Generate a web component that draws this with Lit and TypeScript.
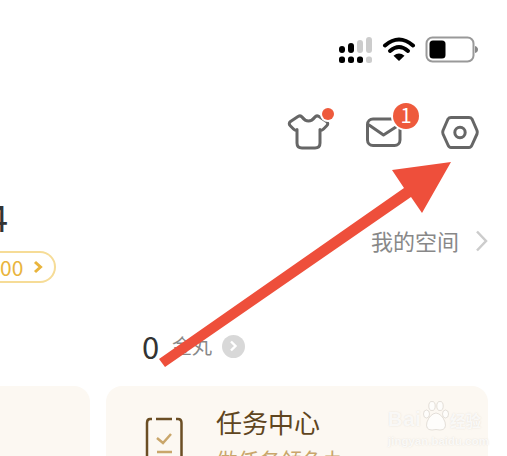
import { LitElement, html, css, svg } from "lit";
import { customElement } from "lit/decorators.js";

const FONT = '"Noto Sans CJK SC", "Noto Sans", sans-serif';

@customElement("app-root")
export class AppRoot extends LitElement {
  static styles = css`
    :host {
      display: block;
      position: relative;
      width: 507px;
      height: 456px;
      overflow: hidden;
      background: #fff;
      font-family: "Noto Sans CJK SC", "Noto Sans", sans-serif;
    }
    svg { display: block; flex: none; }
    .status {
      display: flex;
      justify-content: flex-end;
      height: 32px;
      padding: 34px 25px 0 0;
    }
    .tools {
      display: flex;
      justify-content: flex-end;
      height: 50px;
      margin-top: 34px;
      padding-right: 26px;
    }
    .tools .shirt { margin-right: 26px; }
    .tools .mail { margin-right: 19px; }
    .profile {
      display: flex;
      justify-content: space-between;
      height: 185px;
      padding-right: 19px;
    }
    .who {
      display: flex;
      flex-direction: column;
      align-items: flex-start;
      padding-top: 41px;
    }
    .num {
      font-size: 36px;
      line-height: 50px;
      color: #333;
      width: 8px;
      display: flex;
      justify-content: flex-end;
      overflow: hidden;
    }
    .pill {
      box-sizing: border-box;
      margin-top: 10px;
      width: 56px;
      height: 32px;
      border: 2px solid #f6dc97;
      border-left: none;
      border-radius: 0 16px 16px 0;
      display: flex;
      align-items: center;
      color: #e9b43c;
      font-size: 21px;
      line-height: 1;
      gap: 10px;
    }
    .space {
      display: flex;
      align-items: center;
      gap: 16px;
      height: 24px;
      margin-top: 78px;
      color: #888;
      font-size: 22px;
      line-height: 24px;
    }
    .space svg { margin-top: 2px; }
    .stats {
      display: flex;
      align-items: center;
      height: 24px;
      padding: 0 0 0 142px;
      margin-top: -1px;
    }
    .zero { font-size: 31px; line-height: 24px; color: #333; width: 30px; }
    .unit { font-size: 20px; line-height: 24px; color: #888; width: 50px; }
    .more {
      width: 23px;
      height: 23px;
      border-radius: 50%;
      background: #d8d8d8;
      display: flex;
      align-items: center;
      justify-content: center;
    }
    .cards {
      display: flex;
      gap: 16px;
      margin-top: 28px;
    }
    .card {
      background: #fcf8f2;
      border-radius: 16px;
      height: 120px;
    }
    .card.side { width: 90px; border-radius: 0 16px 16px 0; }
    .card.task {
      width: 382px;
      display: flex;
      gap: 31px;
      box-sizing: border-box;
      padding: 31px 0 0 39px;
    }
    .task-text { margin-top: -13px; }
    .title { font-size: 26px; line-height: 36px; color: #5f4520; }
    .sub { font-size: 21.5px; line-height: 30px; color: #c9a66b; margin-top: 5px; }
    .arrow { position: absolute; left: 0; top: 0; pointer-events: none; }
    .mark {
      position: absolute;
      left: 388px;
      top: 400px;
      width: 95px;
      color: rgba(255, 255, 255, 0.8);
      text-shadow: 0 0 1.5px rgba(170, 160, 145, 0.3);
      pointer-events: none;
    }
    .mark-top { display: flex; align-items: flex-end; height: 33px; }
    .bai { font: 700 20px/28px "Liberation Sans", sans-serif; letter-spacing: 1px; }
    .paw { margin: 0 1px 0 0; }
    .jing { font-size: 15.5px; line-height: 25px; font-weight: 700; }
    .url { font: 700 11.5px/14px "Liberation Sans", sans-serif; white-space: nowrap; margin-top: 1px; }
  `;

  private statusIcons() {
    const cols = [342, 351, 360, 369];
    const tops = [46, 43, 40, 37];
    return html`<svg width="146" height="32" viewBox="336 34 146 32">
      ${cols.map((x, i) => svg`
        <rect x=${x - 3} y=${tops[i]} width="6" height=${53 - tops[i]} rx="3" fill=${i < 2 ? "#000" : "#ccc"}></rect>
        <rect x=${x - 3} y="56.5" width="6" height="6.5" rx="2.5" fill=${i < 3 ? "#000" : "#ccc"}></rect>
      `)}
      <path d="M385 45.5 Q399 33.5 413 45.5" fill="none" stroke="#000" stroke-width="4" stroke-linecap="round"></path>
      <path d="M390 51 Q399 43 408 51" fill="none" stroke="#000" stroke-width="4" stroke-linecap="round"></path>
      <path d="M399 61 L393.5 55.7 Q399 51.5 404.5 55.7 Z" fill="#000"></path>
      <rect x="426.5" y="37.5" width="47" height="24" rx="6" fill="#fff" stroke="#999" stroke-width="2"></rect>
      <rect x="429.5" y="40.5" width="16" height="18" rx="3.5" fill="#000"></rect>
      <path d="M475 46 Q478 47 478 49.5 Q478 52 475 53 Z" fill="#888"></path>
    </svg>`;
  }

  render() {
    return html`
      <div class="status">${this.statusIcons()}</div>
      <div class="tools">
        <svg class="shirt" width="50" height="50" viewBox="286 100 50 50">
          <path d="M298 116.5 Q300.5 115 302 117 Q305 121 308.5 121 Q312 121 315 117 Q316.5 115 319 116.5 L326.5 121.5 Q329 123.5 326.5 126 L323.5 129 Q321.5 131 320 129.5 L320 143 Q320 148 315 148 L302 148 Q297 148 297 143 L297 129.5 Q295.5 131 293.5 129 L290.5 126 Q288 123.5 290.5 121.5 Z" fill="none" stroke="#666" stroke-width="3" stroke-linejoin="round"></path>
          <circle cx="328" cy="114" r="8" fill="#fff"></circle>
          <circle cx="328" cy="114" r="6" fill="#ee5a3c"></circle>
        </svg>
        <svg class="mail" width="58" height="50" viewBox="362 100 58 50">
          <rect x="367.5" y="119" width="32.5" height="26.5" rx="5.5" fill="none" stroke="#666" stroke-width="3"></rect>
          <path d="M369 125 L383.5 135 L399 125" fill="none" stroke="#666" stroke-width="3" stroke-linecap="round" stroke-linejoin="round"></path>
          <circle cx="406" cy="116" r="15" fill="#fff"></circle>
          <circle cx="406" cy="116" r="13" fill="#ee5a3c"></circle>
          <text x="406" y="123" text-anchor="middle" font-size="20" fill="#fff" font-family=${FONT}>1</text>
        </svg>
        <svg width="42" height="50" viewBox="439 100 42 50">
          <path d="M451 117.5 L469 117.5 Q471 117.5 472 119 L477 130.5 Q477.7 132.5 477 134 L472 145 Q471 147.5 469 147.5 L451 147.5 Q449 147.5 448 145 L443 134 Q442.3 132.5 443 130.5 L448 119 Q449 117.5 451 117.5 Z" fill="none" stroke="#666" stroke-width="3" stroke-linejoin="round"></path>
          <circle cx="460" cy="132.5" r="5.2" fill="none" stroke="#666" stroke-width="3"></circle>
        </svg>
      </div>
      <div class="profile">
        <div class="who">
          <div class="num">4</div>
          <div class="pill">
            <span>00</span>
            <svg width="10" height="14" viewBox="0 0 10 14">
              <path d="M2 2 L7.5 7 L2 12" fill="none" stroke="#e9b43c" stroke-width="3"></path>
            </svg>
          </div>
        </div>
        <div class="space">
          <span>我的空间</span>
          <svg width="13" height="22" viewBox="0 0 13 22">
            <path d="M2 1.5 L11 11 L2 20.5" fill="none" stroke="#ccc" stroke-width="2.5"></path>
          </svg>
        </div>
      </div>
      <div class="stats">
        <span class="zero">0</span>
        <span class="unit">金丸</span>
        <span class="more">
          <svg width="9" height="12" viewBox="0 0 9 12">
            <path d="M2 1.5 L6.5 6 L2 10.5" fill="none" stroke="#fff" stroke-width="2.4"></path>
          </svg>
        </span>
      </div>
      <div class="cards">
        <div class="card side"></div>
        <div class="card task">
          <svg width="40" height="60" viewBox="0 0 40 60">
            <path d="M7 2 L5 2 Q2 2 2 6 L2 52 Q2 56 6 56 L32 56 Q36.5 56 36.5 52 L36.5 6 Q36.5 2 33 2 L31 2" fill="none" stroke="#6b4e24" stroke-width="2.5"></path>
            <path d="M11 2 L27 2" stroke="#6b4e24" stroke-width="2.5"></path>
            <path d="M12 21 L18 26 L26 17" fill="none" stroke="#c9a66b" stroke-width="2.5"></path>
            <path d="M12 35 L27 35" stroke="#c9a66b" stroke-width="2.5"></path>
          </svg>
          <div class="task-text">
            <div class="title">任务中心</div>
            <div class="sub">做任务领鱼丸</div>
          </div>
        </div>
      </div>
      <svg class="arrow" width="507" height="456" viewBox="0 0 507 456">
        <polygon points="159,359 404,188 392,170 451,162 422,213 411,197 165,367" fill="#ee4f3b"></polygon>
      </svg>
      <div class="mark">
        <div class="mark-top">
          <span class="bai">Bai</span>
          <svg class="paw" width="27" height="33" viewBox="0 0 27 33">
            <g fill="rgba(255,255,255,.7)" stroke="rgba(170,160,145,.3)" stroke-width="1">
              <ellipse cx="4.5" cy="14" rx="3" ry="4"></ellipse>
              <ellipse cx="10" cy="6" rx="3.2" ry="4.5"></ellipse>
              <ellipse cx="18" cy="6" rx="3.2" ry="4.5"></ellipse>
              <ellipse cx="23.5" cy="14" rx="3" ry="4"></ellipse>
              <path d="M14 13 Q20 14 23 22 Q25 30 18 30 Q14 29 10 30 Q3 30 5 22 Q8 14 14 13 Z"></path>
            </g>
          </svg>
          <span class="jing">经验</span>
        </div>
        <div class="url">jingyan.baidu.com</div>
      </div>
    `;
  }
}
